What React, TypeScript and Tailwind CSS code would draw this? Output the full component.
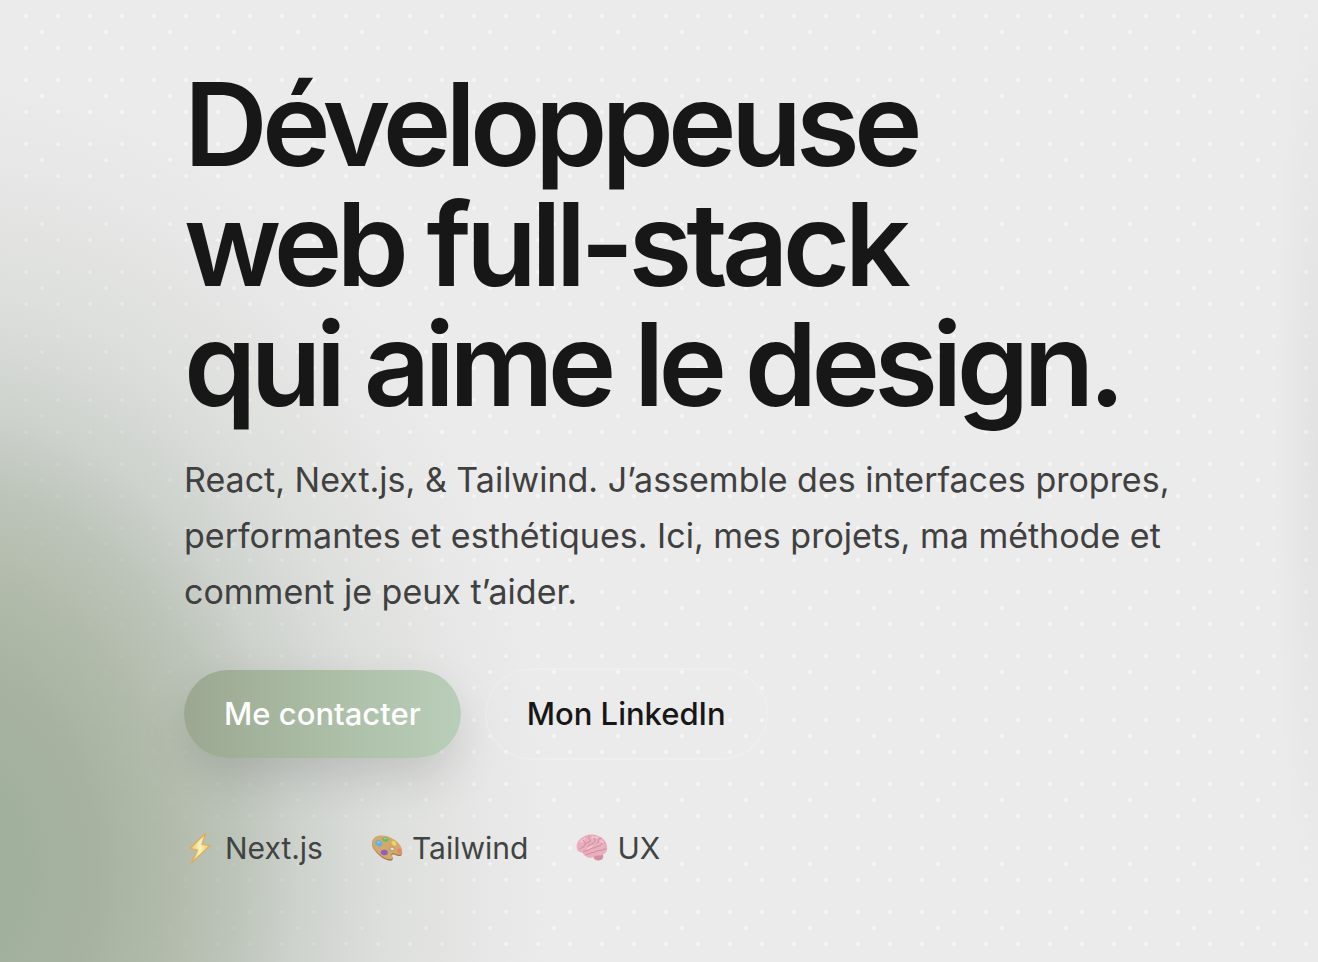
const SAGE_GLOW =
  "bg-[radial-gradient(ellipse_620px_800px_at_-60px_870px,rgba(158,174,154,0.97)_12%,rgba(160,173,152,0.9)_26%,rgba(160,172,151,0.74)_39%,rgba(160,173,156,0.62)_48%,rgba(162,174,160,0.4)_58%,rgba(162,172,158,0.18)_73%,rgba(160,172,155,0.05)_90%,rgba(160,175,155,0)_100%)]";
const EDGE_GLOW =
  "bg-[radial-gradient(ellipse_44px_480px_at_100%_450px,rgba(0,0,0,0.04),rgba(0,0,0,0))]";
const DOTS =
  "bg-[radial-gradient(circle,rgba(255,255,255,0.5)_2px,transparent_2px),radial-gradient(circle,rgba(255,255,255,0.5)_2px,transparent_2px)] bg-[length:32px_32px,64px_64px] bg-[position:10px_0px]";

function Bolt() {
  return (
    <svg viewBox="0 0 32 32" className="size-8 opacity-90" aria-hidden="true">
      <defs>
        <linearGradient id="bolt" x1="0" y1="0" x2="1" y2="0">
          <stop offset="0" stopColor="#f2c25e" />
          <stop offset="0.5" stopColor="#fcf8bd" />
          <stop offset="1" stopColor="#f2cb62" />
        </linearGradient>
      </defs>
      <path
        d="M21.500 1.500 6 16.500 13.500 18 7.500 31 26 13.500 18 12.500Z"
        fill="url(#bolt)"
        stroke="#e8a84c"
        strokeWidth="1.2"
        strokeLinejoin="round"
      />
    </svg>
  );
}

function Palette() {
  return (
    <svg viewBox="0 0 32 32" className="size-8 opacity-90" aria-hidden="true">
      <path
        d="M1.2 10.5C2.5 3.8 10 2.8 17 5.2c8 2.7 14 9.2 14.2 15 .1 3.8-2.4 4.6-5.5 3.2-2.5-1.1-4.6-1.6-4.8.2-.1 1.6 1.6 2.7.6 4.2-1.6 2.2-8.3.2-13-4.3C3.700 19 .5 15 1.200 10.500Z"
        fill="#9a6f38"
      />
      <path
        d="M1.200 9.800C2.500 3.400 10 2.300 17 4.600c8 2.700 14 9 14.200 14.600.1 3.600-2.400 4.300-5.500 3-2.500-1.100-5-1.600-5.200.2-.1 1.600 1.800 2.700.8 4-1.600 2-8.100.2-12.800-4.200C3.700 18.400.5 14.200 1.200 9.800Z"
        fill="#d1a45f"
      />
      <path d="M19.200 15.800c1.200-1.500 4.400-.4 4.300 1.600-.1 1.900-3.600 1.800-4.300.4-.3-.7-.4-1.400 0-2Z" fill="#dcded9" stroke="#94703f" strokeWidth=".7" />
      <ellipse cx="7.800" cy="11.400" rx="3.600" ry="2.900" transform="rotate(35 7.800 11.400)" fill="#55aede" />
      <ellipse cx="14.500" cy="7.500" rx="3.100" ry="2.400" transform="rotate(20 14.500 7.500)" fill="#5fbb55" />
      <ellipse cx="23" cy="11.300" rx="2.800" ry="2" transform="rotate(40 23 11.300)" fill="#ecd65c" />
      <ellipse cx="28.200" cy="19" rx="2.600" ry="2" transform="rotate(45 28.200 19)" fill="#ea7867" />
      <ellipse cx="13.300" cy="20.500" rx="3.600" ry="2.700" transform="rotate(12 13.300 20.500)" fill="#8e4fc0" />
      <path d="M6 10.500q1.500-1.500 3 0M13 6.800q1.500-1 2.500 0" fill="none" stroke="#a9def2" strokeWidth=".8" />
    </svg>
  );
}

function Brain() {
  return (
    <svg viewBox="0 0 32 32" className="size-8 opacity-90" aria-hidden="true">
      <path d="M17.500 25c0-3 7-6 9-3 1.500 2.500.5 5.500-2.500 6.300-3 .8-6.500-.5-6.500-3.300Z" fill="#cf8795" />
      <path
        d="M1 17C-.5 12 3 6.500 8 4.500c4-2.700 10-2.500 14-.5 5 1.500 8.500 5.500 9 10 .8 3.500-.5 7-3.500 8.500-3 1.700-6 .5-8 1.500-3.500 2.500-7 2.200-9.500.5-2-1-3-2.500-3-4C4 21 1.500 19.500 1 17Z"
        fill="#eaa9b9"
      />
      <path
        d="M4 17c2-3 4-1 5-4s4-2 5-4M7 7c0 3 3 2 2 5M13 4c-2 3 3 3 1 6M19 3.500c-3 3 2 4-1 7s-5 1-6 4M25 6c-4 0-1 4-4 5M29 11c-4-2-3 3-6 3s-3 2-6 2-4 3-7 3-3 1.500-3 1.500M30 17c-3-1-3 2-6 1.500s-4 2-7 2-4 2-7 2"
        fill="none"
        stroke="#c77e92"
        strokeWidth="0.9"
        strokeLinecap="round"
      />
      <path
        d="M5 10c1-2 2-3 4-3.500M16 5.500c2-1 4-.5 5 .2M24 9c1.500 0 3 .8 3.500 2M12 16.500c2-1 3-1 4-2.500"
        fill="none"
        stroke="#f8ccd5"
        strokeWidth="1.200"
        strokeLinecap="round"
      />
    </svg>
  );
}

const skills = [
  { label: "Next.js", Icon: Bolt },
  { label: "Tailwind", Icon: Palette },
  { label: "UX", Icon: Brain },
];

export default function App() {
  return (
    <main className={`min-h-screen bg-[#ebebeb] font-['Inter',sans-serif] text-[#171717]`}>
      <div className={`min-h-screen ${DOTS}`}>
        <div className={`min-h-screen ${SAGE_GLOW}`}>
          <section className={`min-h-screen px-8 pt-16 pb-20 lg:pr-36 lg:pl-[184px] ${EDGE_GLOW}`}>
            <h1 className="text-[116px] leading-[120px] font-semibold tracking-tighter max-lg:text-7xl">
              Développeuse
              <br />
              web full-stack
              <br />
              qui aime le design.
            </h1>
            <p className="mt-7 max-w-[1000px] text-[34px] leading-[56px] text-[#404040]">
              React, Next.js, &amp; Tailwind. J’assemble des interfaces propres, performantes et
              esthétiques. Ici, mes projets, ma méthode et comment je peux t’aider.
            </p>
            <div className="mt-12 flex flex-wrap items-center gap-6 text-[31px] leading-[48px] font-medium">
              <button
                type="button"
                className="rounded-full bg-linear-to-r from-[#9ba791] via-[#abbda5] to-[#b9ceb8] px-10 py-5 text-white shadow-[0_20px_50px_-4px_rgba(0,0,0,0.15)]"
              >
                Me contacter
              </button>
              <a href="#linkedin" className="rounded-full border-2 border-white/15 px-10 py-5">
                Mon LinkedIn
              </a>
            </div>
            <ul className="mt-16 flex flex-wrap gap-12 text-[30px] leading-[48px] text-[#404442]">
              {skills.map(({ label, Icon }) => (
                <li key={label} className="flex items-center gap-[9px]">
                  <Icon />
                  {label}
                </li>
              ))}
            </ul>
          </section>
        </div>
      </div>
    </main>
  );
}
